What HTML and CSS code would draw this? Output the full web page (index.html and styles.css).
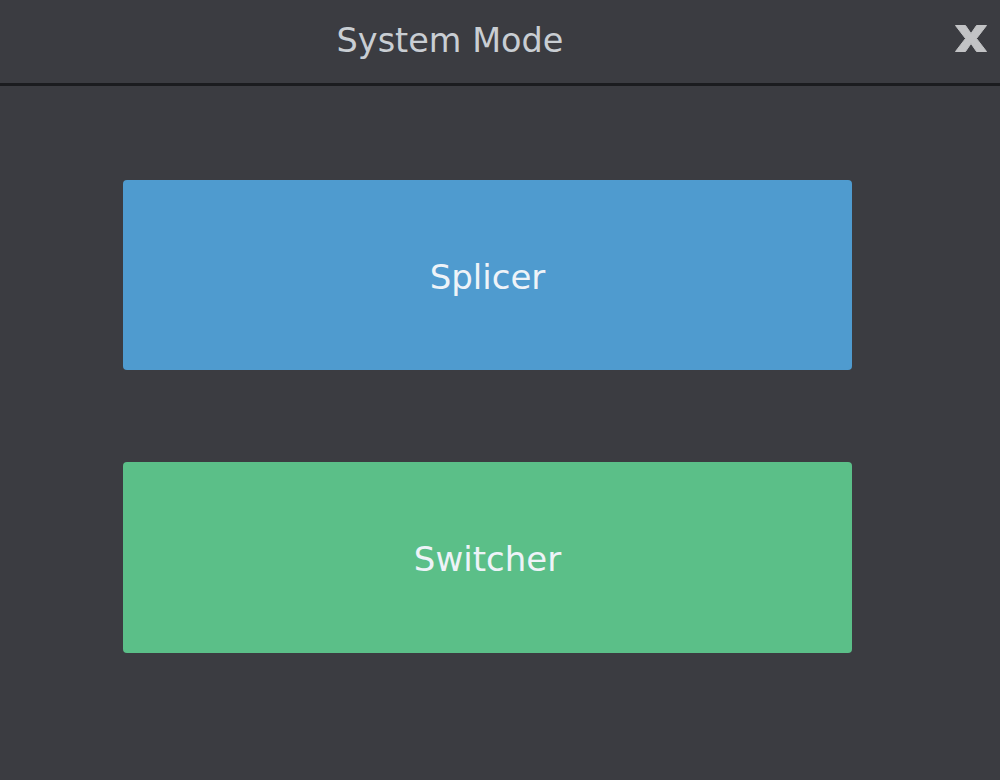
FILE: index.html
```html
<!DOCTYPE html>
<html>
<head>
<meta charset="utf-8">
<link rel="stylesheet" href="styles.css">
</head>
<body>
<div class="dialog">
  <header class="header">
    <span class="title">System Mode</span>
    <button class="close" aria-label="Close">
      <svg width="32" height="27" viewBox="0 0 32 27">
        <path d="M0.5 0.5 L10.5 0.5 L16 8.5 L21.5 0.5 L31.5 0.5 L21.5 13.5 L31.5 26.5 L21.5 26.5 L16 18.5 L10.5 26.5 L0.5 26.5 L10.5 13.5 Z" fill="#c2c3c5" stroke="#c2c3c5" stroke-width="1" stroke-linejoin="round"/>
      </svg>
    </button>
  </header>
  <main class="content">
    <button class="mode mode-splicer">Splicer</button>
    <button class="mode mode-switcher">Switcher</button>
  </main>
</div>
</body>
</html>
```
FILE: styles.css
```css
html, body {
  margin: 0;
  padding: 0;
  background: #3b3c41;
  font-family: "DejaVu Sans", Verdana, sans-serif;
}
.dialog {
  width: 1000px;
  height: 780px;
  background: #3b3c41;
}
.header {
  position: relative;
  height: 83px;
  border-bottom: 3px solid #1b1c1f;
  display: flex;
  align-items: center;
  justify-content: center;
  box-sizing: content-box;
}
.title {
  color: #c9ced3;
  font-size: 33.5px;
  margin-left: -100px;
  margin-top: -2px;
}
.close {
  position: absolute;
  left: 955px;
  top: 25px;
  padding: 0;
  border: 0;
  background: transparent;
  width: 32px;
  height: 27px;
  display: block;
}
.close svg { display: block; }
.content {
  display: flex;
  flex-direction: column;
  gap: 92px;
  padding: 94px 0 0 123px;
}
.mode {
  width: 729px;
  height: 190px;
  border: 0;
  border-radius: 4px;
  color: #eef3f8;
  font-family: "DejaVu Sans", Verdana, sans-serif;
  font-size: 34px;
  padding: 3px 0 0 0;
  margin: 0;
}
.mode-splicer { background: #4f9bcf; }
.mode-switcher { background: #5bbf88; height: 191px; }
```
